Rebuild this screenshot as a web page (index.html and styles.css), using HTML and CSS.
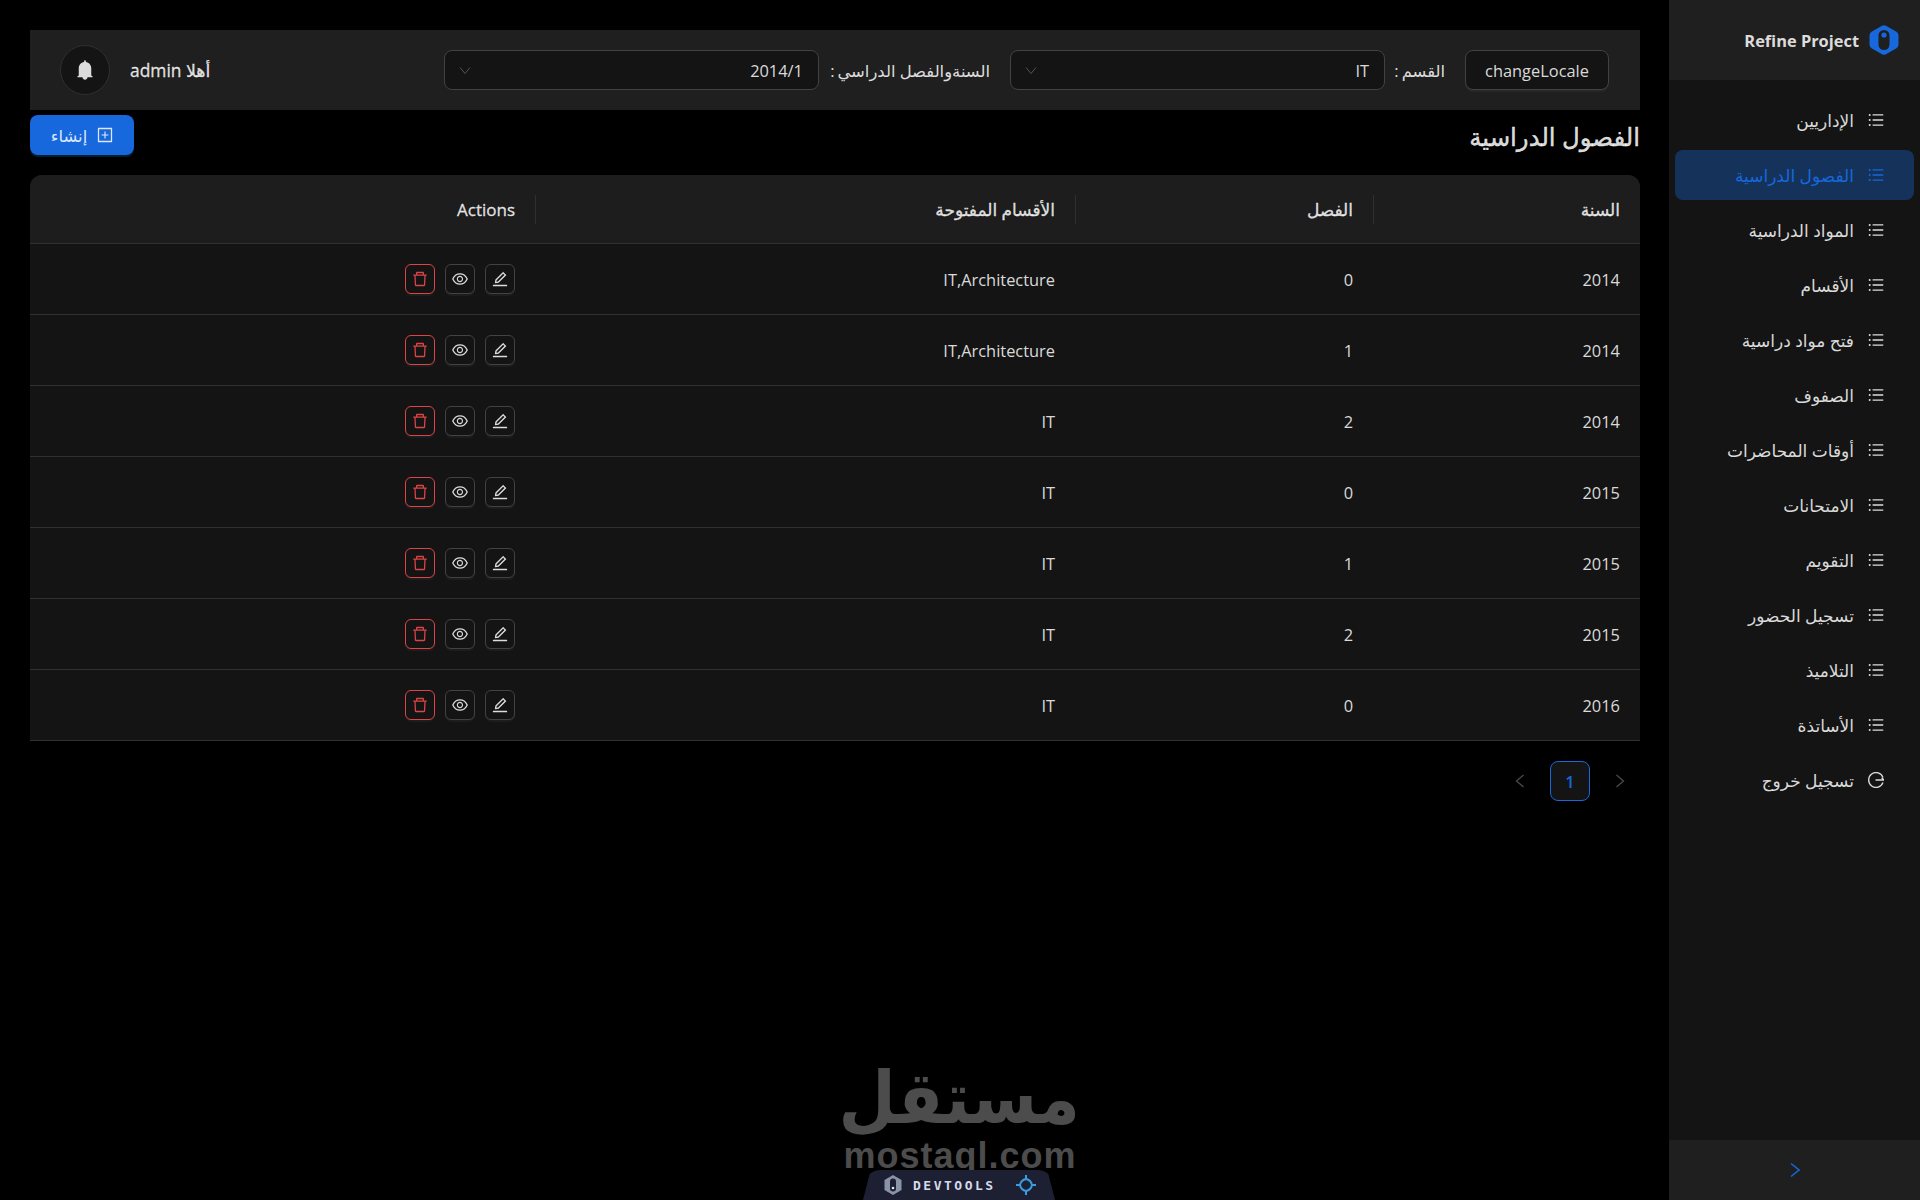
FILE: index.html
```html
<!DOCTYPE html>
<html lang="ar" dir="rtl">
<head>
  <meta charset="UTF-8">
  <title>الفصول الدراسية</title>
  <link rel="stylesheet" href="styles.css">
</head>
<body>

<svg class="sprite" xmlns="http://www.w3.org/2000/svg">
  <symbol id="i-list" viewBox="64 64 896 896"><path d="M912 192H328c-4.4 0-8 3.6-8 8v56c0 4.4 3.6 8 8 8h584c4.4 0 8-3.6 8-8v-56c0-4.4-3.6-8-8-8zm0 284H328c-4.4 0-8 3.6-8 8v56c0 4.4 3.6 8 8 8h584c4.4 0 8-3.6 8-8v-56c0-4.4-3.6-8-8-8zm0 284H328c-4.4 0-8 3.6-8 8v56c0 4.4 3.6 8 8 8h584c4.4 0 8-3.6 8-8v-56c0-4.4-3.6-8-8-8zM104 228a56 56 0 10112 0 56 56 0 10-112 0zm0 284a56 56 0 10112 0 56 56 0 10-112 0zm0 284a56 56 0 10112 0 56 56 0 10-112 0z"/></symbol>
  <symbol id="i-edit" viewBox="64 64 896 896"><path d="M257.7 752c2 0 4-.2 6-.5L431.9 722c2-.4 3.9-1.3 5.3-2.8l423.9-423.9a9.96 9.96 0 000-14.1L694.9 114.9c-1.9-1.9-4.4-2.9-7.1-2.9s-5.2 1-7.1 2.9L256.8 538.8c-1.5 1.5-2.4 3.3-2.8 5.3l-29.5 168.2a33.5 33.5 0 009.4 29.8c6.6 6.4 14.9 9.9 23.8 9.9zm67.4-174.4L687.8 215l73.3 73.3-362.7 362.6-88.9 15.7 15.6-89zM880 836H144c-17.7 0-32 14.3-32 32v36c0 4.4 3.6 8 8 8h784c4.4 0 8-3.6 8-8v-36c0-17.7-14.3-32-32-32z"/></symbol>
  <symbol id="i-eye" viewBox="64 64 896 896"><path d="M942.2 486.2C847.4 286.5 704.1 186 512 186c-192.2 0-335.4 100.5-430.2 300.3a60.3 60.3 0 000 51.5C176.6 737.5 319.9 838 512 838c192.2 0 335.4-100.5 430.2-300.3 7.7-16.2 7.7-35 0-51.5zM512 766c-161.3 0-279.4-81.8-362.7-254C232.6 339.8 350.7 258 512 258c161.3 0 279.4 81.8 362.7 254C791.5 684.2 673.4 766 512 766zm-4-430c-97.2 0-176 78.8-176 176s78.8 176 176 176 176-78.8 176-176-78.8-176-176-176zm0 288c-61.9 0-112-50.1-112-112s50.1-112 112-112 112 50.1 112 112-50.1 112-112 112z"/></symbol>
  <symbol id="i-trash" viewBox="64 64 896 896"><path d="M360 184h-8c4.4 0 8-3.6 8-8v8h304v-8c0 4.4 3.6 8 8 8h-8v72h72v-80c0-35.3-28.7-64-64-64H352c-35.3 0-64 28.7-64 64v80h72v-72zm504 72H160c-17.7 0-32 14.3-32 32v32c0 4.4 3.6 8 8 8h60.4l24.7 523c1.6 34.1 29.8 61 63.9 61h454c34.2 0 62.3-26.8 63.9-61l24.7-523H888c4.4 0 8-3.6 8-8v-32c0-17.7-14.3-32-32-32zM731.3 840H292.7l-24.2-512h487l-24.2 512z"/></symbol>
  <symbol id="i-chevron" viewBox="0 0 12 12"><path d="M1 3.5 6 9.5 11 3.5" fill="none" stroke="currentColor" stroke-width="1"/></symbol>
</svg>

<div class="layout">

  <aside class="sider">
    <div class="sider-head">
      <svg class="logo" viewBox="0 0 30 30">
        <path d="M13 .8a4 4 0 0 1 4 0l10.5 6a4 4 0 0 1 2 3.4v9.6a4 4 0 0 1-2 3.4l-10.5 6a4 4 0 0 1-4 0l-10.5-6a4 4 0 0 1-2-3.4v-9.6a4 4 0 0 1 2-3.4z" fill="#1668dc"/>
        <rect x="9.5" y="5" width="11" height="20" rx="5.5" fill="#1f1f1f"/>
        <circle cx="15" cy="10" r="2.6" fill="#1668dc"/>
      </svg>
      <span class="brand" dir="ltr">Refine Project</span>
    </div>
    <nav class="menu">
      <a class="menu-item"><svg class="ico"><use href="#i-list"/></svg><span>الإداريين</span></a>
      <a class="menu-item active"><svg class="ico"><use href="#i-list"/></svg><span>الفصول الدراسية</span></a>
      <a class="menu-item"><svg class="ico"><use href="#i-list"/></svg><span>المواد الدراسية</span></a>
      <a class="menu-item"><svg class="ico"><use href="#i-list"/></svg><span>الأقسام</span></a>
      <a class="menu-item"><svg class="ico"><use href="#i-list"/></svg><span>فتح مواد دراسية</span></a>
      <a class="menu-item"><svg class="ico"><use href="#i-list"/></svg><span>الصفوف</span></a>
      <a class="menu-item"><svg class="ico"><use href="#i-list"/></svg><span>أوقات المحاضرات</span></a>
      <a class="menu-item"><svg class="ico"><use href="#i-list"/></svg><span>الامتحانات</span></a>
      <a class="menu-item"><svg class="ico"><use href="#i-list"/></svg><span>التقويم</span></a>
      <a class="menu-item"><svg class="ico"><use href="#i-list"/></svg><span>تسجيل الحضور</span></a>
      <a class="menu-item"><svg class="ico"><use href="#i-list"/></svg><span>التلاميذ</span></a>
      <a class="menu-item"><svg class="ico"><use href="#i-list"/></svg><span>الأساتذة</span></a>
      <a class="menu-item">
        <svg class="ico" viewBox="0 0 16 16" fill="none" stroke="currentColor" stroke-width="1.3"><path d="M15 5.4A7.4 7.4 0 1 0 15 10.6"/><path d="M7.5 8H16M13.6 5.8 16 8"/></svg>
        <span>تسجيل خروج</span>
      </a>
    </nav>
    <div class="sider-foot">
      <svg class="collapse" viewBox="0 0 10 16"><path d="M1 1.5 9 8 1 14.5" fill="none" stroke="currentColor" stroke-width="1.5"/></svg>
    </div>
  </aside>

  <main class="main">
    <header class="topbar">
      <button class="btn-locale">changeLocale</button>
      <label class="field-label label-dept">القسم<span class="colon">:</span></label>
      <div class="select"><span>IT</span><svg class="chev"><use href="#i-chevron"/></svg></div>
      <label class="field-label label-term">السنةوالفصل الدراسي<span class="colon">:</span></label>
      <div class="select"><span>2014/1</span><svg class="chev"><use href="#i-chevron"/></svg></div>
      <div class="user">
        <span class="user-name">أهلا admin</span>
        <span class="bell">
          <svg viewBox="64 64 896 896"><path d="M816 768h-24V428c0-141.1-104.3-257.7-240-277.1V112c0-22.1-17.9-40-40-40s-40 17.9-40 40v38.9c-135.7 19.4-240 136-240 277.1v340h-24c-17.7 0-32 14.3-32 32v32c0 4.4 3.6 8 8 8h216c0 61.8 50.2 112 112 112s112-50.2 112-112h216c4.4 0 8-3.6 8-8v-32c0-17.7-14.3-32-32-32z" fill="currentColor"/></svg>
        </span>
      </div>
    </header>

    <div class="page-head">
      <h1>الفصول الدراسية</h1>
      <button class="btn-create">
        <svg viewBox="64 64 896 896"><path d="M328 544h152v152c0 4.4 3.6 8 8 8h48c4.4 0 8-3.6 8-8V544h152c4.4 0 8-3.6 8-8v-48c0-4.4-3.6-8-8-8H544V328c0-4.4-3.6-8-8-8h-48c-4.4 0-8 3.6-8 8v152H328c-4.4 0-8 3.6-8 8v48c0 4.4 3.6 8 8 8z" fill="currentColor"/><path d="M880 112H144c-17.7 0-32 14.3-32 32v736c0 17.7 14.3 32 32 32h736c17.7 0 32-14.3 32-32V144c0-17.7-14.3-32-32-32zm-40 728H184V184h656v656z" fill="currentColor"/></svg>
        <span>إنشاء</span>
      </button>
    </div>

    <table class="grid">
      <colgroup>
        <col class="c-year"><col class="c-term"><col class="c-dept"><col class="c-act">
      </colgroup>
      <thead>
        <tr><th>السنة</th><th>الفصل</th><th>الأقسام المفتوحة</th><th>Actions</th></tr>
      </thead>
      <tbody id="rows"></tbody>
    </table>

    <div class="pager">
      <span class="pg-arrow"><svg viewBox="0 0 10 16"><path d="M1.5 2 8.5 8 1.5 14" fill="none" stroke="currentColor" stroke-width="1.3"/></svg></span>
      <span class="pg-num">1</span>
      <span class="pg-arrow"><svg viewBox="0 0 10 16"><path d="M8.5 2 1.5 8 8.5 14" fill="none" stroke="currentColor" stroke-width="1.3"/></svg></span>
    </div>
  </main>
</div>

<!-- watermark and toolbar sit over the page -->
<div class="watermark">
  <div class="wm-ar">مستقل</div>
  <div class="wm-en" dir="ltr">mostaql.com</div>
</div>
<div class="devtools" dir="ltr">
  <svg class="dt-logo" viewBox="0 0 20 22">
    <path d="M10 1 18.5 6v10L10 21 1.5 16V6z" fill="#8b93a8"/>
    <rect x="7" y="4.5" width="6" height="13" rx="3" fill="#1d2033"/>
    <circle cx="10" cy="14" r="1.3" fill="#e2e6f0"/>
  </svg>
  <span class="dt-text">DEVTOOLS</span>
  <svg class="dt-target" viewBox="0 0 20 20" fill="none" stroke="#3b9be0" stroke-width="2" stroke-linejoin="round">
    <path d="M10 4Q15 5 16 10 15 15 10 16 5 15 4 10 5 5 10 4z"/>
    <path d="M10 0V4M10 16V20M0 10H4M16 10H20"/>
  </svg>
</div>

<script>
const data = [
  ["2014", "0", "IT,Architecture"],
  ["2014", "1", "IT,Architecture"],
  ["2014", "2", "IT"],
  ["2015", "0", "IT"],
  ["2015", "1", "IT"],
  ["2015", "2", "IT"],
  ["2016", "0", "IT"]
];

document.getElementById("rows").innerHTML = data.map(r => `
  <tr>
    <td>${r[0]}</td>
    <td>${r[1]}</td>
    <td>${r[2]}</td>
    <td>
      <div class="acts">
        <button class="act"><svg><use href="#i-edit"/></svg></button>
        <button class="act"><svg><use href="#i-eye"/></svg></button>
        <button class="act danger"><svg><use href="#i-trash"/></svg></button>
      </div>
    </td>
  </tr>`).join("");
</script>

</body>
</html>
```

FILE: styles.css
```css
* {
  box-sizing: border-box;
}
body {
  margin: 0;
  height: 1200px;
  overflow: hidden;
  background-color: #000;
  color: rgba(255, 255, 255, 0.85);
  font-family: 'Open Sans', 'DejaVu Sans', sans-serif;
  font-size: 16.4px;
}
button {
  font-family: inherit;
  font-size: inherit;
  color: inherit;
  cursor: pointer;
}
.sprite {
  display: none;
}
.layout {
  display: flex;
  height: 1200px;
}

/* sidebar */
.sider {
  width: 251px;
  flex-shrink: 0;
  display: flex;
  flex-direction: column;
  background-color: #141414;
}
.sider-head {
  height: 80px;
  display: flex;
  align-items: center;
  gap: 10px;
  padding-right: 21px;
  background-color: #1f1f1f;
}
.logo {
  width: 30px;
  height: 30px;
}
.brand {
  font-weight: 700;
}
.menu {
  flex: 1;
  padding: 15px 6px 0;
  display: flex;
  flex-direction: column;
  gap: 5px;
}
.menu-item {
  height: 50px;
  display: flex;
  align-items: center;
  gap: 14px;
  padding-right: 30px;
  border-radius: 8px;
  font-size: 17px;
}
.menu-item.active {
  background-color: #15325b;
  color: #1668dc;
}
.ico {
  width: 16px;
  height: 16px;
  fill: currentColor;
}
.ico[fill="none"] {
  fill: none;
}
.sider-foot {
  height: 60px;
  display: flex;
  align-items: center;
  justify-content: center;
  background-color: #1f1f1f;
  color: #1668dc;
}
.collapse {
  width: 10px;
  height: 16px;
}

/* top bar */
.main {
  flex: 1;
  padding: 30px 29px 0 30px;
}
.topbar {
  height: 80px;
  display: flex;
  align-items: center;
  gap: 10px;
  padding: 0 31px 0 30px;
  background-color: #1f1f1f;
}
.btn-locale {
  width: 144px;
  height: 40px;
  margin-left: 10px;
  background-color: #141414;
  border: 1px solid #424242;
  border-radius: 8px;
  box-shadow: 0 2px 0 rgba(255, 255, 255, 0.04);
}
.field-label {
  white-space: nowrap;
}
.label-dept {
  width: 50px;
}
.label-term {
  width: 161px;
}
.colon {
  margin-right: 3px;
}
.select {
  width: 375px;
  height: 40px;
  margin-left: 10px;
  display: flex;
  align-items: center;
  justify-content: space-between;
  padding: 0 15px 0 14px;
  background-color: #141414;
  border: 1px solid #424242;
  border-radius: 8px;
}
.chev {
  width: 12px;
  height: 12px;
  color: #555;
}
.user {
  margin-right: auto;
  display: flex;
  align-items: center;
  gap: 20px;
}
.user-name {
  font-size: 17.4px;
  font-weight: 500;
  -webkit-text-stroke: 0.3px currentColor;
}
.bell {
  width: 50px;
  height: 50px;
  display: flex;
  align-items: center;
  justify-content: center;
  background-color: #141414;
  border: 1px solid #303030;
  border-radius: 50%;
}
.bell svg {
  width: 20px;
  height: 20px;
}

/* page title */
.page-head {
  height: 65px;
  display: flex;
  justify-content: space-between;
  align-items: flex-start;
  padding-top: 5px;
}
h1 {
  margin: 0;
  font-size: 24.4px;
  font-weight: 500;
  line-height: 44px;
  -webkit-text-stroke: 0.4px currentColor;
}
.btn-create {
  width: 104px;
  height: 40px;
  display: flex;
  align-items: center;
  justify-content: center;
  gap: 10px;
  background-color: #1668dc;
  border: none;
  border-radius: 8px;
  box-shadow: 0 2px 0 rgba(5, 145, 255, 0.2);
}
.btn-create svg {
  width: 16px;
  height: 16px;
}

/* table */
.grid {
  width: 100%;
  table-layout: fixed;
  border-collapse: separate;
  border-spacing: 0;
  background-color: #141414;
  border-radius: 12px 12px 0 0;
}
.c-year { width: 267px; }
.c-term { width: 298px; }
.c-dept { width: 540px; }
.grid th {
  position: relative;
  height: 69px;
  padding: 0 20px;
  text-align: right;
  font-size: 17px;
  font-weight: 500;
  -webkit-text-stroke: 0.3px currentColor;
  background-color: #1d1d1d;
  border-bottom: 1px solid #303030;
}
.grid th:first-child {
  border-top-right-radius: 12px;
}
.grid th:last-child {
  border-top-left-radius: 12px;
}
.grid th:not(:last-child)::before {
  content: "";
  position: absolute;
  left: 0;
  top: 20px;
  height: 29px;
  width: 1px;
  background-color: #303030;
}
.grid td {
  height: 71px;
  padding: 0 20px;
  text-align: right;
  border-bottom: 1px solid #303030;
}
.acts {
  display: flex;
  gap: 10px;
}
.act {
  width: 30px;
  height: 30px;
  padding: 0;
  display: flex;
  align-items: center;
  justify-content: center;
  background-color: #141414;
  border: 1px solid #424242;
  border-radius: 6px;
  box-shadow: 0 2px 0 rgba(255, 255, 255, 0.04);
}
.act svg {
  width: 16px;
  height: 16px;
  fill: currentColor;
}
.act.danger {
  color: #dc4446;
  border-color: #dc4446;
}

/* pagination */
.pager {
  display: flex;
  gap: 10px;
  margin-top: 20px;
}
.pg-arrow {
  width: 40px;
  height: 40px;
  display: flex;
  align-items: center;
  justify-content: center;
  color: #4a4a4a;
}
.pg-arrow svg {
  width: 10px;
  height: 16px;
}
.pg-num {
  width: 40px;
  height: 40px;
  display: flex;
  align-items: center;
  justify-content: center;
  color: #1668dc;
  font-weight: 600;
  background-color: #141414;
  border: 1px solid #1668dc;
  border-radius: 8px;
}

/* watermark + devtools */
.watermark {
  position: absolute;
  left: 840px;
  top: 1064px;
  width: 240px;
  color: #4c4c4c;
  text-align: center;
}
.wm-ar {
  font-family: 'DejaVu Sans', sans-serif;
  font-size: 66px;
  font-weight: 700;
  line-height: 70px;
  margin-bottom: 7px;
  transform: scaleY(1.1);
}
.wm-en {
  font-family: 'Liberation Sans', sans-serif;
  font-size: 36px;
  font-weight: 700;
  line-height: 29px;
  letter-spacing: 1px;
}
.devtools {
  position: absolute;
  left: 863px;
  top: 1170px;
  width: 192px;
  height: 30px;
  display: flex;
  align-items: center;
  gap: 10px;
  padding-left: 20px;
  background-color: #1d2033;
  border-radius: 18px 18px 0 0;
  clip-path: polygon(4% 0, 96% 0, 100% 100%, 0 100%);
}
.dt-logo {
  width: 20px;
  height: 22px;
}
.dt-text {
  width: 92px;
  color: #d5d9e8;
  font-family: 'DejaVu Sans Mono', monospace;
  font-size: 13px;
  font-weight: 700;
  letter-spacing: 2.5px;
}
.dt-target {
  width: 20px;
  height: 20px;
  margin-left: 1px;
}
```
